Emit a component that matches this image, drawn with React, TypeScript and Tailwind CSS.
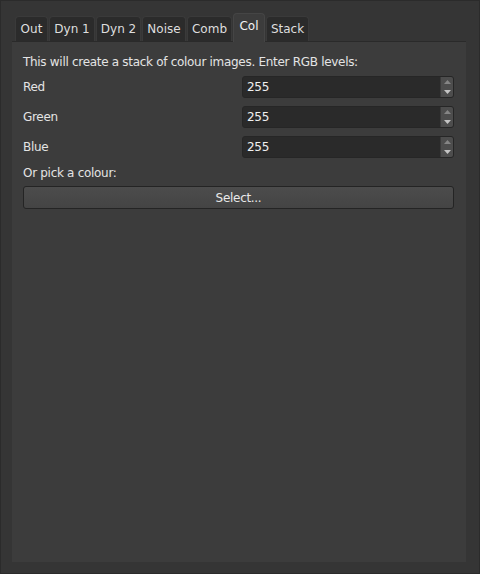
import { useState } from 'react'

const tabs = [
  { name: 'Out', w: 'w-[33px]' },
  { name: 'Dyn 1', w: 'w-[46px]' },
  { name: 'Dyn 2', w: 'w-[45px]' },
  { name: 'Noise', w: 'w-[44px]' },
  { name: 'Comb', w: 'w-[45px]' },
  { name: 'Col', w: 'w-[32px]' },
  { name: 'Stack', w: 'w-[43px]' },
]

function SpinBox({ value }: { value: string }) {
  return (
    <div className="flex h-[22px] w-[212px] rounded-[3px] border border-[#262626] bg-[#2a2a2a]">
      <div className="flex flex-1 items-center pl-[4px] text-[#f0f0f0]">{value}</div>
      <div className="flex w-[13px] flex-col rounded-r-[2px] border-l border-[#3a3a3a] bg-[#4d4d4d]">
        <div className="flex flex-1 items-center justify-center">
          <svg width="7" height="4" viewBox="0 0 7 4">
            <path d="M0 4 L3.5 0 L7 4 Z" fill="#858585" />
          </svg>
        </div>
        <div className="flex flex-1 items-center justify-center">
          <svg width="7" height="4" viewBox="0 0 7 4">
            <path d="M0 0 L3.5 4 L7 0 Z" fill="#c4c4c4" />
          </svg>
        </div>
      </div>
    </div>
  )
}

export default function App() {
  const [active, setActive] = useState('Col')
  const rows = ['Red', 'Green', 'Blue']

  return (
    <div
      className="flex h-[574px] w-[480px] flex-col border border-[#2b2b2b] bg-[#353535] pl-[11px] pr-[13px] pt-[12px] pb-[11px] text-[12px] tracking-[-0.3px] text-[#e4e4e4]"
      style={{ fontFamily: '"DejaVu Sans", sans-serif' }}
    >
      {/* tab bar */}
      <div className="flex h-[28px] items-end gap-[1px] pl-[3px] tracking-normal">
        {tabs.map((t) =>
          t.name === active ? (
            <div
              key={t.name}
              onClick={() => setActive(t.name)}
              className={`${t.w} relative z-10 -mb-[1px] flex h-[29px] items-center justify-center rounded-t-[4px] border border-b-0 border-[#454545] bg-[#3c3c3c] pb-[4px] text-[#f2f2f2]`}
            >
              {t.name}
            </div>
          ) : (
            <div
              key={t.name}
              onClick={() => setActive(t.name)}
              className={`${t.w} flex h-[25px] items-center justify-center rounded-t-[4px] border border-b-0 border-[#3a3a3a] bg-[#2b2b2b] text-[#dedede]`}
            >
              {t.name}
            </div>
          ),
        )}
      </div>

      {/* panel */}
      <div className="flex flex-1 flex-col border-t border-[#2a2a2a] bg-[#3c3c3c] pl-[11px] pr-[12px] pt-[11px]">
        <div className="flex h-[18px] items-center">
          This will create a stack of colour images. Enter RGB levels:
        </div>
        <div className="mt-[5px] flex flex-col gap-[8px]">
          {rows.map((r) => (
            <div key={r} className="flex h-[22px] items-center justify-between">
              <span>{r}</span>
              <SpinBox value="255" />
            </div>
          ))}
        </div>
        <div className="mt-[6px] flex h-[18px] items-center">Or pick a colour:</div>
        <button className="mt-[4px] flex h-[23px] w-full items-center justify-center rounded-[3px] border border-[#242424] bg-gradient-to-b from-[#4c4c4c] to-[#444444] text-[#e8e8e8]">
          Select...
        </button>
      </div>
    </div>
  )
}
